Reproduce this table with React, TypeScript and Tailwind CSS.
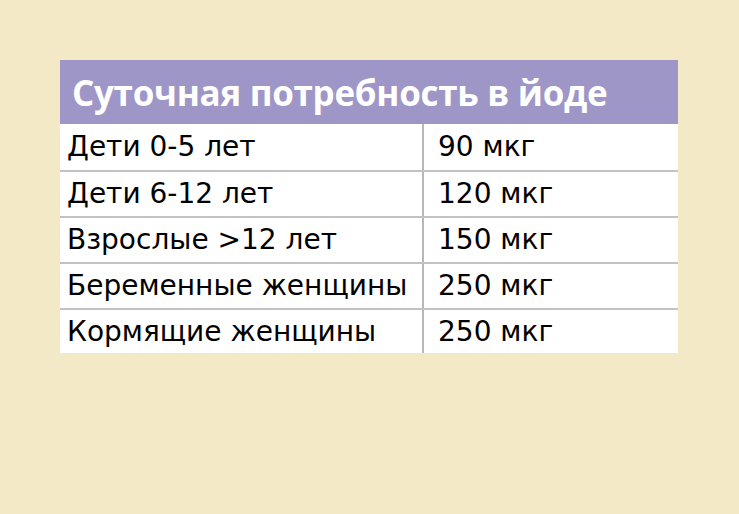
import React from "react";

const rows: [string, string][] = [
  ["Дети 0-5 лет", "90 мкг"],
  ["Дети 6-12 лет", "120 мкг"],
  ["Взрослые >12 лет", "150 мкг"],
  ["Беременные женщины", "250 мкг"],
  ["Кормящие женщины", "250 мкг"],
];

export default function App() {
  return (
    <div className="w-[739px] h-[514px] bg-[#f3e9c7] pt-[60px] pl-[60px]">
      <div className="w-[618px]">
        <div className="h-[64px] bg-[#9e96c6] flex items-center pl-[12px]">
          <span className="text-white font-bold text-[35px] leading-none font-['Open_Sans',sans-serif] tracking-[-0.3px]">
            Суточная потребность в йоде
          </span>
        </div>
        <div className="bg-white font-['DejaVu_Sans',sans-serif]">
          {rows.map(([a, b], i) => (
            <div
              key={i}
              className={`flex text-[28px] text-black ${i === 0 ? "h-[46px]" : i === rows.length - 1 ? "h-[45px] border-t-2 border-[#c2c2c2]" : "h-[46px] border-t-2 border-[#c2c2c2]"}`}
            >
              <div className="w-[364px] pl-[7px] flex items-center border-r-2 border-[#b8b8b8]">{a}</div>
              <div className="flex-1 pl-[14px] flex items-center">{b}</div>
            </div>
          ))}
        </div>
      </div>
    </div>
  );
}
